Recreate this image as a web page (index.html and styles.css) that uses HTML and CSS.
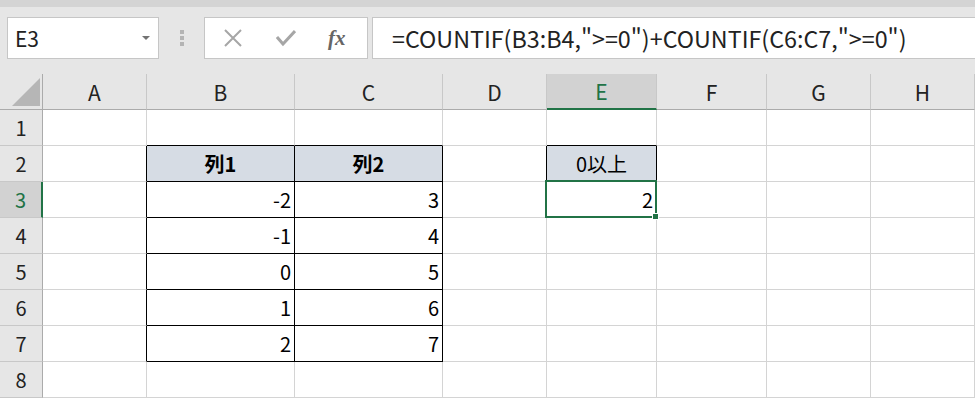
FILE: index.html
```html
<!DOCTYPE html>
<html lang="ja">
<head>
  <meta charset="UTF-8">
  <title>Excel // COUNTIF</title>
  <link rel="stylesheet" href="styles.css">
</head>
<body>
  <div class="strip"></div>
  <div class="toolbar">
    <div class="namebox">
      <span class="ref">E3</span>
      <span class="drop"></span>
    </div>
    <div class="grip"><i></i><i></i><i></i></div>
    <div class="buttons">
      <svg class="btn" width="18" height="18" viewBox="0 0 18 18">
        <path d="M1 1 L17 17 M17 1 L1 17" stroke="#a6a6a6" stroke-width="2" fill="none"/>
      </svg>
      <svg class="btn" width="20" height="18" viewBox="0 0 20 18">
        <path d="M1 8 L7 15 L19 2" stroke="#a6a6a6" stroke-width="3" fill="none"/>
      </svg>
      <span class="fx">fx</span>
    </div>
    <div class="formula">=COUNTIF(B3:B4,"&gt;=0")+COUNTIF(C6:C7,"&gt;=0")</div>
  </div>

  <div class="sheet">
    <!-- column headers -->
    <div class="corner"><div class="tri"></div></div>
    <div class="ch">A</div>
    <div class="ch">B</div>
    <div class="ch">C</div>
    <div class="ch">D</div>
    <div class="ch active">E</div>
    <div class="ch">F</div>
    <div class="ch">G</div>
    <div class="ch">H</div>

    <!-- row 1 -->
    <div class="rh">1</div>
    <div class="c"></div>
    <div class="c bb"></div>
    <div class="c bb"></div>
    <div class="c"></div>
    <div class="c bb"></div>
    <div class="c"></div>
    <div class="c"></div>
    <div class="c"></div>

    <!-- row 2 -->
    <div class="rh">2</div>
    <div class="c br"></div>
    <div class="c hd bold br bb">列1</div>
    <div class="c hd bold br bb">列2</div>
    <div class="c br"></div>
    <div class="c hd br bb">0以上</div>
    <div class="c"></div>
    <div class="c"></div>
    <div class="c"></div>

    <!-- row 3 -->
    <div class="rh active">3</div>
    <div class="c br"></div>
    <div class="c num br bb">-2</div>
    <div class="c num br bb">3</div>
    <div class="c"></div>
    <div class="c num sel">2<span class="handle"></span></div>
    <div class="c"></div>
    <div class="c"></div>
    <div class="c"></div>

    <!-- row 4 -->
    <div class="rh">4</div>
    <div class="c br"></div>
    <div class="c num br bb">-1</div>
    <div class="c num br bb">4</div>
    <div class="c"></div>
    <div class="c"></div>
    <div class="c"></div>
    <div class="c"></div>
    <div class="c"></div>

    <!-- row 5 -->
    <div class="rh">5</div>
    <div class="c br"></div>
    <div class="c num br bb">0</div>
    <div class="c num br bb">5</div>
    <div class="c"></div>
    <div class="c"></div>
    <div class="c"></div>
    <div class="c"></div>
    <div class="c"></div>

    <!-- row 6 -->
    <div class="rh">6</div>
    <div class="c br"></div>
    <div class="c num br bb">1</div>
    <div class="c num br bb">6</div>
    <div class="c"></div>
    <div class="c"></div>
    <div class="c"></div>
    <div class="c"></div>
    <div class="c"></div>

    <!-- row 7 -->
    <div class="rh">7</div>
    <div class="c br"></div>
    <div class="c num br bb">2</div>
    <div class="c num br bb">7</div>
    <div class="c"></div>
    <div class="c"></div>
    <div class="c"></div>
    <div class="c"></div>
    <div class="c"></div>

    <!-- row 8 -->
    <div class="rh">8</div>
    <div class="c"></div>
    <div class="c"></div>
    <div class="c"></div>
    <div class="c"></div>
    <div class="c"></div>
    <div class="c"></div>
    <div class="c"></div>
    <div class="c"></div>
  </div>
</body>
</html>
```

FILE: styles.css
```css
* {
  box-sizing: border-box;
}
body {
  margin: 0;
  width: 975px;
  height: 398px;
  overflow: hidden;
  background: #fff;
  color: #000;
  font-family: "Noto Sans CJK JP", "Noto Sans", sans-serif;
}
.strip {
  height: 7px;
  background: #d4d4d4;
}
.toolbar {
  height: 67px;
  background: #e6e6e6;
  display: flex;
  align-items: flex-start;
  padding: 10px 0 0 7px;
}
.namebox {
  width: 152px;
  height: 42px;
  background: #fff;
  border: 1px solid #c6c6c6;
  display: flex;
  align-items: center;
  justify-content: space-between;
  padding: 0 8px 0 7px;
}
.ref {
  font-size: 21px;
  color: #222;
}
.drop {
  width: 0;
  height: 0;
  border-left: 4px solid transparent;
  border-right: 4px solid transparent;
  border-top: 4px solid #737373;
}
.grip {
  width: 45px;
  height: 42px;
  display: flex;
  flex-direction: column;
  align-items: center;
  justify-content: center;
  gap: 2px;
}
.grip i {
  width: 4px;
  height: 4px;
  background: #b4b4b4;
}
.buttons {
  width: 164px;
  height: 42px;
  background: #fff;
  border: 1px solid #c6c6c6;
  display: flex;
  align-items: center;
  padding-left: 19px;
  gap: 34px;
}
.fx {
  font-family: "Liberation Serif", serif;
  font-style: italic;
  font-weight: bold;
  font-size: 21px;
  color: #666;
  margin-left: -2px;
}
.formula {
  flex: 1;
  height: 42px;
  margin-left: 4px;
  margin-right: -2px;
  background: #fff;
  border: 1px solid #c6c6c6;
  display: flex;
  align-items: center;
  padding-left: 19px;
  font-size: 23.3px;
  color: #222;
  white-space: nowrap;
}

/* sheet grid */
.sheet {
  display: grid;
  grid-template-columns: 43px 104px 148px 148px 104px 110px 110px 104px 1fr;
  grid-auto-rows: 36px;
}
.corner {
  background: #e6e6e6;
  border-right: 1px solid #ababab;
  border-bottom: 1px solid #ababab;
  display: flex;
  align-items: flex-end;
  justify-content: flex-end;
  padding: 0 2px 3px 0;
}
.tri {
  width: 28px;
  height: 28px;
  background: #b6b6b6;
  clip-path: polygon(100% 0, 100% 100%, 0 100%);
}
.ch {
  background: #e6e6e6;
  border-right: 1px solid #c8c8c8;
  border-bottom: 1px solid #ababab;
  display: flex;
  align-items: center;
  justify-content: center;
  font-size: 21px;
  color: #222;
}
.ch.active {
  background: #d2d2d2;
  color: #217346;
  border-bottom: 2px solid #217346;
}
.rh {
  background: #e6e6e6;
  border-right: 1px solid #ababab;
  border-bottom: 1px solid #c8c8c8;
  display: flex;
  align-items: center;
  justify-content: center;
  font-size: 20px;
  color: #222;
}
.rh.active {
  background: #d2d2d2;
  color: #217346;
  border-right: 2px solid #217346;
}
.c {
  border-right: 1px solid #d4d4d4;
  border-bottom: 1px solid #d4d4d4;
  display: flex;
  align-items: center;
  justify-content: center;
  font-size: 20px;
}
.c.num {
  justify-content: flex-end;
  padding-right: 3px;
}
.c.hd {
  background: #d6dce4;
}
.c.bold {
  font-weight: bold;
}
.c.br {
  border-right-color: #000;
}
.c.bb {
  border-bottom-color: #000;
}
.c.sel {
  position: relative;
}
.c.sel::after {
  content: "";
  position: absolute;
  top: -2px;
  left: -2px;
  right: -1px;
  bottom: -1px;
  border: 2px solid #217346;
}
.handle {
  position: absolute;
  right: -3px;
  bottom: -3px;
  width: 7px;
  height: 7px;
  background: #217346;
  border: 1px solid #fff;
  z-index: 1;
}
```
